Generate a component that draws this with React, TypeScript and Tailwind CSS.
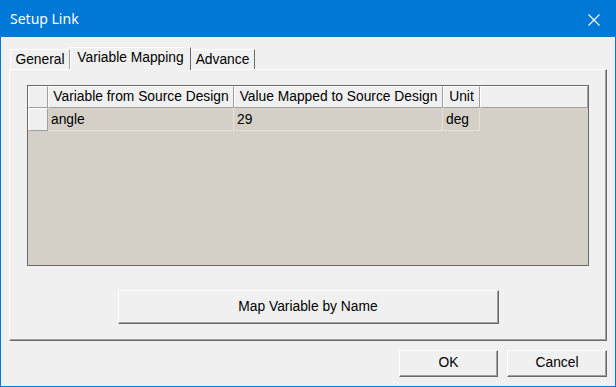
const ui = { fontFamily: '"Liberation Sans", Arial, sans-serif' };

function Raised({ className = "", children }: { className?: string; children?: React.ReactNode }) {
  return (
    <div
      className={`bg-[#f0f0f0] border-t border-l border-white border-r border-b border-r-[#a0a0a0] border-b-[#a0a0a0] ${className}`}
    >
      {children}
    </div>
  );
}

export default function App() {
  return (
    <div className="w-[616px] h-[387px] bg-[#0078d7] p-px flex flex-col text-[13.8px] text-black" style={ui}>
      {/* Title bar */}
      <div className="h-[36px] flex items-center justify-between pl-[9px] pr-[15px] text-white">
        <span className="text-[14px] leading-none" style={{ fontFamily: '"Noto Sans", "Open Sans", sans-serif' }}>
          Setup Link
        </span>
        <svg width="12" height="12" viewBox="0 0 12 12" className="mt-px">
          <path d="M0.5 0.5 L11.5 11.5 M11.5 0.5 L0.5 11.5" stroke="white" strokeWidth="1.1" />
        </svg>
      </div>

      {/* Body */}
      <div className="flex-1 bg-[#f0f0f0] flex flex-col px-[8px] pt-[10px] pb-[9px]">
        {/* Tabs */}
        <div className="h-[22px] flex items-end pl-px relative z-10">
          <div className="h-[20px] w-[60px] border-t border-l border-white border-r border-r-[#a0a0a0] flex items-center justify-center pt-[2px]">
            General
          </div>
          <div className="h-[23px] w-[121px] -mb-px bg-[#f0f0f0] border-t border-l border-white border-r border-r-[#696969] flex items-center justify-center pb-[2px]">
            Variable Mapping
          </div>
          <div className="h-[20px] w-[64px] border-t border-white border-r border-r-[#696969] flex items-center justify-center pt-[2px]">
            Advance
          </div>
        </div>

        {/* Panel */}
        <div className="h-[272px] border-t border-l border-white border-r border-b border-r-[#696969] border-b-[#696969] shadow-[inset_-1px_-1px_0_#a0a0a0] flex flex-col px-[17px] pt-[15px]">
          {/* Grid */}
          <div className="h-[181px] border border-[#696969] bg-[#d4d0c8] flex flex-col">
            <div className="flex h-[22px] leading-none">
              <Raised className="w-[20px] h-full" />
              <Raised className="w-[186px] h-full flex items-center justify-center">Variable from Source Design</Raised>
              <Raised className="w-[209px] h-full flex items-center justify-center">Value Mapped to Source Design</Raised>
              <Raised className="w-[37px] h-full flex items-center justify-center">Unit</Raised>
              <Raised className="flex-1 h-full" />
            </div>
            <div className="flex h-[23px] leading-none">
              <Raised className="w-[20px] h-full" />
              <div className="w-[186px] h-full border-r border-b border-[#e6e3de] flex items-center pl-[3px] pt-[2px]">angle</div>
              <div className="w-[209px] h-full border-r border-b border-[#e6e3de] flex items-center pl-[3px] pt-[2px]">29</div>
              <div className="w-[37px] h-full border-r border-b border-[#e6e3de] flex items-center pl-[3px] pt-[2px]">deg</div>
            </div>
          </div>

          <div className="flex justify-center mt-[24px]">
            <button className="w-[381px] h-[34px] bg-[#f0f0f0] border-t border-l border-white border-r border-b border-r-[#696969] border-b-[#696969] shadow-[inset_-1px_-1px_0_#a0a0a0] flex items-center justify-center">
              Map Variable by Name
            </button>
          </div>
        </div>

        {/* Footer buttons */}
        <div className="flex justify-end gap-[9px] mt-[9px]">
          <button className="w-[99px] h-[27px] bg-[#f0f0f0] border-t border-l border-white border-r border-b border-r-[#696969] border-b-[#696969] shadow-[inset_-1px_-1px_0_#a0a0a0] flex items-center justify-center">
            OK
          </button>
          <button className="w-[100px] h-[27px] bg-[#f0f0f0] border-t border-l border-white border-r border-b border-r-[#696969] border-b-[#696969] shadow-[inset_-1px_-1px_0_#a0a0a0] flex items-center justify-center">
            Cancel
          </button>
        </div>
      </div>
    </div>
  );
}
